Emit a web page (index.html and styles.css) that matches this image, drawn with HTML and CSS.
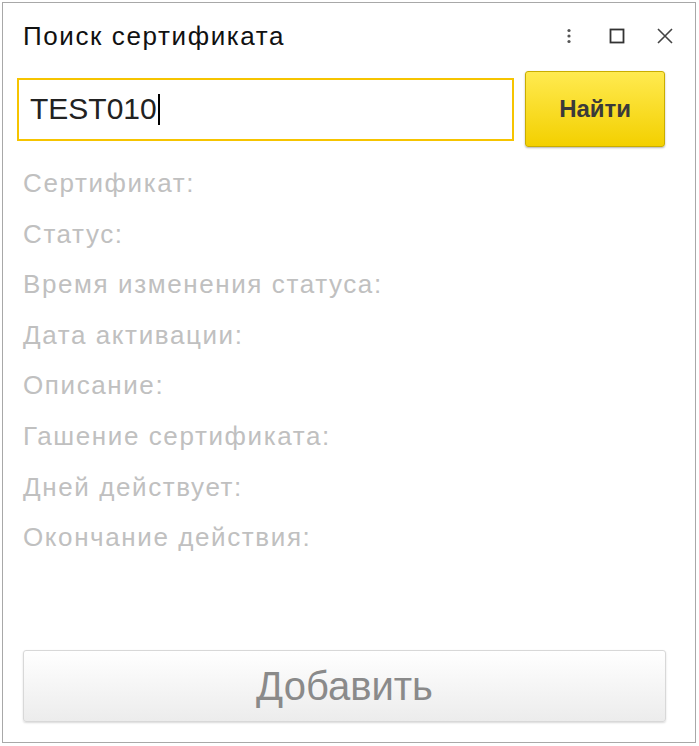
FILE: index.html
```html
<!DOCTYPE html>
<html lang="ru">
<head>
<meta charset="utf-8">
<title>Поиск сертификата</title>
<link rel="stylesheet" href="styles.css">
</head>
<body>
<div class="window">
  <div class="titlebar">
    <div class="title">Поиск сертификата</div>
    <div class="controls">
      <svg class="ic" width="16" height="16" viewBox="0 0 16 16"><circle cx="8" cy="2.5" r="1.6" fill="#555"/><circle cx="8" cy="8" r="1.6" fill="#555"/><circle cx="8" cy="13.5" r="1.6" fill="#555"/></svg>
      <svg class="ic" width="16" height="16" viewBox="0 0 16 16"><rect x="1.5" y="1.5" width="13" height="13" fill="none" stroke="#333" stroke-width="1.8"/></svg>
      <svg class="ic" width="16" height="16" viewBox="0 0 16 16"><path d="M1 1 L15 15 M15 1 L1 15" stroke="#444" stroke-width="1.6" fill="none"/></svg>
    </div>
  </div>
  <div class="searchrow">
    <div class="field"><span class="value">TEST010</span><span class="caret"></span></div>
    <button class="btn-find">Найти</button>
  </div>
  <div class="labels">
    <div class="label">Сертификат:</div>
    <div class="label">Статус:</div>
    <div class="label">Время изменения статуса:</div>
    <div class="label">Дата активации:</div>
    <div class="label">Описание:</div>
    <div class="label">Гашение сертификата:</div>
    <div class="label">Дней действует:</div>
    <div class="label">Окончание действия:</div>
  </div>
  <div class="footer">
    <button class="btn-add">Добавить</button>
  </div>
</div>
</body>
</html>
```

FILE: styles.css
```css
html, body {
  margin: 0;
  padding: 0;
  background: #fff;
}
body {
  font-family: "Liberation Sans", Arial, sans-serif;
  padding: 2px;
}
.window {
  box-sizing: border-box;
  width: 694px;
  height: 741px;
  border: 1px solid #a8a8a8;
  background: #fff;
  display: flex;
  flex-direction: column;
  padding: 0 30px 20px 20px;
}
.titlebar {
  display: flex;
  align-items: center;
  justify-content: space-between;
  height: 68px;
  padding-bottom: 2px;
  box-sizing: border-box;
}
.title {
  font-size: 26px;
  letter-spacing: 1.6px;
  color: #111;
}
.controls {
  display: flex;
  align-items: center;
  gap: 32px;
  margin-right: -8px;
}
.ic {
  display: block;
}
.searchrow {
  display: flex;
  align-items: center;
  gap: 11px;
  margin-left: -6px;
}
.field {
  box-sizing: border-box;
  width: 498px;
  height: 63px;
  border: 2px solid #f6c400;
  display: flex;
  align-items: center;
  padding-left: 11px;
  font-size: 30px;
  color: #222;
}
.caret {
  display: inline-block;
  width: 2px;
  height: 31px;
  background: #000;
  margin-left: 1px;
}
.btn-find {
  box-sizing: border-box;
  width: 140px;
  height: 76px;
  border: 1px solid #c9ad00;
  border-radius: 3px;
  background: linear-gradient(#ffea50, #f3d000);
  box-shadow: 0 1px 2px rgba(0,0,0,0.3);
  font-family: "Liberation Sans", Arial, sans-serif;
  font-weight: bold;
  font-size: 24px;
  color: #3a3a3a;
  padding: 0;
}
.labels {
  display: flex;
  flex-direction: column;
  padding-top: 11px;
}
.label {
  font-size: 26px;
  letter-spacing: 1.6px;
  line-height: 50.6px;
  color: #c0c0c0;
}
.footer {
  margin-top: auto;
}
.btn-add {
  box-sizing: border-box;
  width: 643px;
  height: 72px;
  border: 1px solid #d8d8d8;
  border-radius: 3px;
  background: linear-gradient(#ffffff, #ececec);
  box-shadow: 0 1px 2px rgba(0,0,0,0.15);
  font-family: "Liberation Sans", Arial, sans-serif;
  font-size: 40px;
  color: #8a8a8a;
  padding: 0;
}
```
